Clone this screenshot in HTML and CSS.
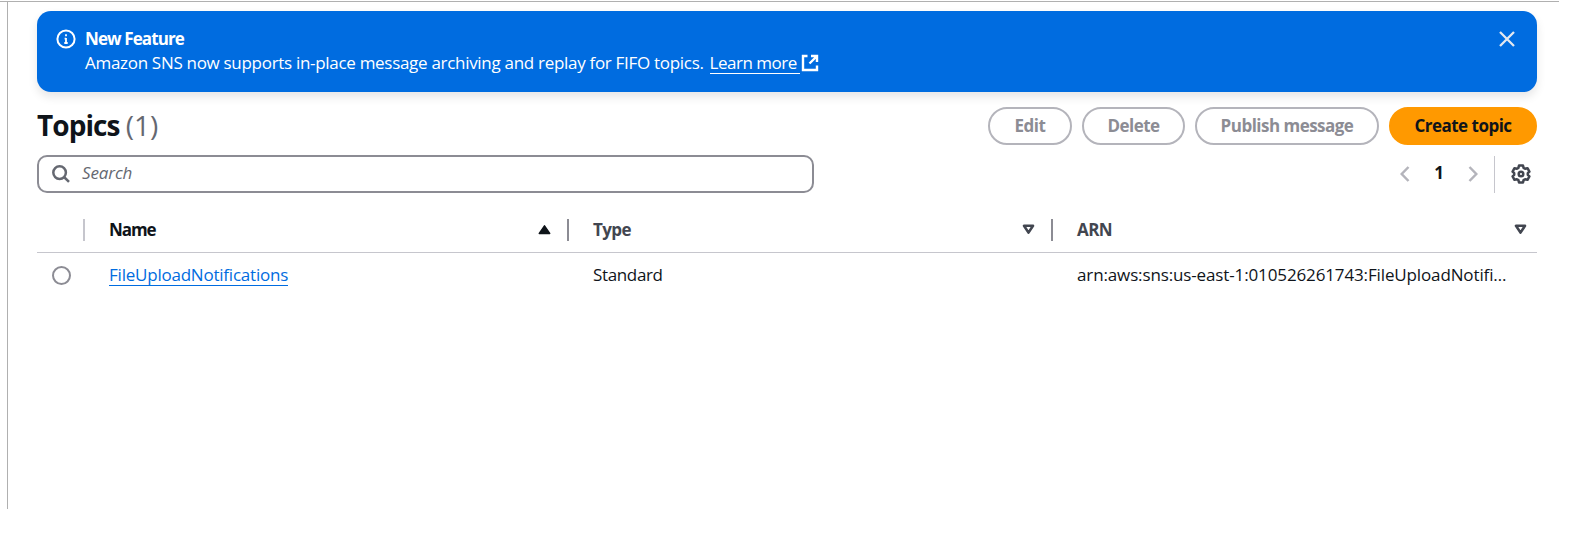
FILE: index.html
```
<!DOCTYPE html>
<html lang="en">
<head>
<meta charset="utf-8">
<title>Topics</title>
<link rel="stylesheet" href="styles.css">
</head>
<body>
<main class="page">
  <section class="flash">
    <svg class="flash-icon" viewBox="0 0 20 20" fill="none" stroke="#fff" stroke-width="2"><circle cx="10" cy="10" r="8.600"/><path d="M10 9v5M10 5.300v2M8.600 9.600H10M8.300 14h3.400" stroke-width="1.800"/></svg>
    <div class="flash-text">
      <div class="flash-title">New Feature</div>
      <div class="flash-body"><span class="message">Amazon SNS now supports in-place message archiving and replay for FIFO topics.</span><a class="learn">Learn more</a><svg class="ext" viewBox="0 0 18 18" fill="none" stroke="#fff" stroke-width="2.400"><path d="M6.500 2H2v14h14v-4.500M10 2h6v6M16 2L8.500 9.500"/></svg></div>
    </div>
    <svg class="close" viewBox="0 0 16 16" stroke="#e3e8ef" stroke-width="2.300"><path d="M1 1l14 14M15 1L1 15"/></svg>
  </section>

  <header class="heading">
    <h1 class="title">Topics <span class="count">(1)</span></h1>
    <div class="actions">
      <button class="btn edit">Edit</button>
      <button class="btn delete">Delete</button>
      <button class="btn publish">Publish message</button>
      <button class="btn create">Create topic</button>
    </div>
  </header>

  <div class="tools">
    <div class="search">
      <svg class="lens" viewBox="0 0 18 18" fill="none" stroke="#656871" stroke-width="2.500"><circle cx="7.600" cy="7.600" r="6.300"/><path d="M12 12l5 4.800"/></svg>
      <span class="placeholder">Search</span>
    </div>
    <div class="pager">
      <svg class="chev" viewBox="0 0 10 16" fill="none" stroke="#b4b4bb" stroke-width="2.500"><path d="M8.500 1L1.700 8l6.800 7"/></svg>
      <span class="page-no">1</span>
      <svg class="chev" viewBox="0 0 10 16" fill="none" stroke="#b4b4bb" stroke-width="2.500"><path d="M1.500 1l6.800 7-6.800 7"/></svg>
      <span class="rule"></span>
      <svg class="gear" viewBox="0 0 20 20" fill="none" stroke="#424650" stroke-width="2.500" stroke-linejoin="round"><path d="M8 1.600h4l.6 2.300 1.500.9 2.400-.6 1.900 3.400-1.600 1.600v1.600l1.600 1.600-1.900 3.400-2.400-.6-1.500.9-.6 2.300H8l-.6-2.300-1.500-.9-2.400.6-1.900-3.400 1.600-1.600V9.200L1.600 7.600l1.900-3.400 2.400.6 1.500-.9z"/><circle cx="10" cy="10" r="2.300"/></svg>
    </div>
  </div>

  <div class="table">
    <div class="row head">
      <div class="cell pick"></div>
      <div class="cell dark"><span class="name">Name</span><svg class="tri" viewBox="0 0 13 11"><path d="M6.500 1.800L11.700 9.400H1.300z" fill="#0f141a" stroke="#0f141a" stroke-width="1.500" stroke-linejoin="round"/></svg></div>
      <div class="cell"><span>Type</span><svg class="tri" viewBox="0 0 13 11"><path d="M2 1.800h9L6.500 8.600z" fill="none" stroke="#424650" stroke-width="2.600" stroke-linejoin="round"/></svg></div>
      <div class="cell"><span>ARN</span><svg class="tri" viewBox="0 0 13 11"><path d="M2 1.800h9L6.500 8.600z" fill="none" stroke="#424650" stroke-width="2.600" stroke-linejoin="round"/></svg></div>
    </div>
    <div class="row data">
      <div class="cell"><span class="radio"></span></div>
      <div class="cell"><a class="link">FileUploadNotifications</a></div>
      <div class="cell"><span class="kind">Standard</span></div>
      <div class="cell"><span class="arn">arn:aws:sns:us-east-1:010526261743:FileUploadNotifi…</span></div>
    </div>
  </div>
</main>
</body>
</html>
```
FILE: styles.css
```
* { box-sizing: border-box; }
body {
  margin: 0;
  padding-top: 1px;
  background: #fff;
  color: #0f141a;
  font-family: "Open Sans", "Noto Sans", sans-serif;
  font-size: 17px;
  line-height: 24px;
  white-space: nowrap;
}
svg { display: block; flex: none; }
.page {
  position: relative;
  width: 1559px;
  height: 508px;
  padding: 10px 22px 0 37px;
  border-top: 1px solid #b0b0b0;
}
.page::before {
  content: "";
  position: absolute;
  left: 7px;
  top: 0;
  width: 1px;
  height: 507px;
  background: #b0b0b0;
}
.flash {
  display: flex;
  align-items: flex-start;
  width: 1500px;
  height: 81px;
  margin-top: -1px;
  padding: 16px 22px 0 18px;
  border-radius: 14px;
  background: #006ce0;
  color: #fff;
  box-shadow: 0 5px 10px rgba(0, 7, 22, .1);
}
.flash-icon { width: 20px; height: 20px; margin: 2px 9px 0 1px; }
.flash-text { flex: 1; }
.flash-title { font-weight: 700; letter-spacing: -.9px; }
.flash-body { display: flex; }
.message { letter-spacing: -.3px; }
.learn { height: 23px; margin-left: 6px; padding-right: 3px; border-bottom: 1px solid #fff; letter-spacing: -.5px; }
.ext { width: 18px; height: 18px; margin: 3px 0 0 1px; }
.close { width: 16px; height: 16px; margin-top: 4px; }
.heading {
  display: flex;
  justify-content: space-between;
  width: 1500px;
  height: 38px;
  margin-top: 15px;
}
.title { margin: 0; font-size: 28px; line-height: 37px; font-weight: 700; letter-spacing: -.95px; }
.count { font-weight: 400; color: #656871; letter-spacing: 0; }
.actions { display: flex; gap: 10px; }
.btn {
  height: 38px;
  padding: 0 0 1px;
  border: 2px solid #b4b4bb;
  border-radius: 19px;
  background: #fff;
  color: #8c8c94;
  font: inherit;
  font-weight: 700;
  letter-spacing: -.52px;
  text-align: center;
}
.edit { width: 84px; }
.delete { width: 103px; }
.publish { width: 184px; }
.create { width: 148px; border-color: #ff9900; background: #ff9900; color: #0f141a; }
.tools {
  display: flex;
  justify-content: space-between;
  width: 1500px;
  margin-top: 10px;
}
.search {
  display: flex;
  align-items: center;
  width: 777px;
  height: 38px;
  padding: 0 13px;
  border: 2px solid #8c8c94;
  border-radius: 10px;
}
.lens { width: 18px; height: 18px; }
.placeholder { margin: -2px 0 0 12px; color: #656871; font-style: italic; letter-spacing: -.1px; }
.pager { display: flex; align-items: center; height: 38px; padding-right: 6px; }
.chev { width: 10px; height: 16px; }
.page-no { width: 58px; margin-top: -2px; text-align: center; font-weight: 700; }
.rule { width: 1px; height: 37px; margin: 0 16px; background: #c6c6cd; }
.gear { width: 20px; height: 20px; }
.table { width: 1500px; margin-top: 15px; }
.row { display: grid; grid-template-columns: 48px 484px 484px 484px; }
.head { height: 45px; border-bottom: 1px solid #c6c6cd; color: #424650; font-weight: 700; letter-spacing: -.6px; }
.name { letter-spacing: -1.1px; }
.cell { display: flex; align-items: center; padding-left: 24px; }
.head .cell {
  position: relative;
  justify-content: space-between;
  height: 43px;
  padding: 0 18px 0 24px;
}
.head .cell:not(:last-child)::after {
  content: "";
  position: absolute;
  right: 0;
  top: 11px;
  width: 2px;
  height: 22px;
  background: #8c8c94;
}
.head .pick:not(:last-child)::after { background: #c6c6cd; }
.head .dark { color: #0f141a; }
.tri { width: 13px; height: 11px; }
.head .cell:last-child { padding-right: 10px; }
.data { height: 44px; }
.data .cell:first-child { padding-left: 15px; }
.radio { width: 19px; height: 19px; border: 2px solid #8c8c94; border-radius: 50%; }
.link { height: 23px; margin-top: -1px; border-bottom: 1px solid #006ce0; color: #006ce0; letter-spacing: -.22px; }
.kind { letter-spacing: -.35px; }
.arn { letter-spacing: -.13px; }
```
